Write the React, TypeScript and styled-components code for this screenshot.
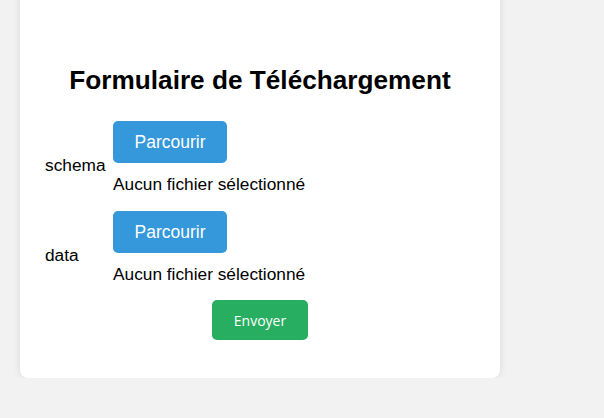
import React from "react";
import styled, { createGlobalStyle } from "styled-components";

const Global = createGlobalStyle`
  html, body { margin: 0; padding: 0; background: #f2f2f2; }
  body { font-family: "Liberation Sans", Arial, sans-serif; color: #000; }
`;

const Page = styled.div`
  padding: 0 20px;
  width: 480px;
`;

const Card = styled.form`
  box-sizing: border-box;
  width: 480px;
  margin-top: -20px;
  padding: 85px 25px 38px;
  background: #fff;
  border-radius: 8px;
  box-shadow: 0 0 8px rgba(0, 0, 0, 0.1);
  display: flex;
  flex-direction: column;
`;

const Title = styled.h2`
  margin: 0 0 26px;
  font-size: 26.2px;
  line-height: 30px;
  font-weight: bold;
  text-align: center;
`;

const Row = styled.div`
  display: flex;
  align-items: center;
  margin-bottom: 17px;
`;

const Label = styled.label`
  flex: 0 0 68px;
  font-size: 17.3px;
  line-height: 20px;
  margin-top: 14px;
`;

const FileBlock = styled.div`
  display: flex;
  flex-direction: column;
  align-items: flex-start;
`;

const BrowseButton = styled.button`
  width: 114px;
  height: 42px;
  border: none;
  border-radius: 5px;
  background: #3498db;
  color: #fff;
  font-family: "Liberation Sans", Arial, sans-serif;
  font-size: 17.5px;
  padding: 0;
  margin-bottom: 11px;
  cursor: pointer;
`;

const NoFile = styled.span`
  font-size: 17.3px;
  line-height: 20px;
`;

const SubmitButton = styled.button`
  align-self: center;
  width: 96px;
  height: 40px;
  margin-top: -1px;
  border: none;
  border-radius: 5px;
  background: #27ae60;
  color: #fff;
  font-family: "Open Sans", "Noto Sans", sans-serif;
  font-size: 14px;
  padding: 0;
  cursor: pointer;
`;

const FileRow = ({ label }: { label: string }) => (
  <Row>
    <Label>{label}</Label>
    <FileBlock>
      <BrowseButton type="button">Parcourir</BrowseButton>
      <NoFile>Aucun fichier sélectionné</NoFile>
    </FileBlock>
  </Row>
);

export default function App() {
  return (
    <>
      <Global />
      <Page>
        <Card onSubmit={(e) => e.preventDefault()}>
          <Title>Formulaire de Téléchargement</Title>
          <FileRow label="schema" />
          <FileRow label="data" />
          <SubmitButton type="submit">Envoyer</SubmitButton>
        </Card>
      </Page>
    </>
  );
}
